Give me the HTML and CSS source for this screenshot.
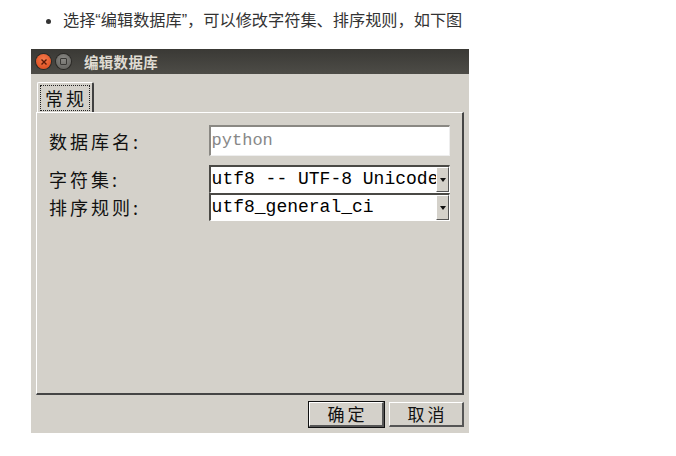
FILE: index.html
```html
<!DOCTYPE html>
<html>
<head>
<meta charset="utf-8">
<link rel="stylesheet" href="styles.css">
</head>
<body>
<ul class="intro">
  <li>选择“编辑数据库”，可以修改字符集、排序规则，如下图</li>
</ul>
<div class="window">
  <div class="titlebar">
    <span class="btn-close"><svg width="8" height="8" viewBox="0 0 8 8"><path d="M1.5 1.5L6.5 6.5M6.5 1.5L1.5 6.5" stroke="#5a1a08" stroke-width="1.4"/></svg></span>
    <span class="btn-min"><span class="sq"></span></span>
    <span class="title">编辑数据库</span>
  </div>
  <div class="body">
    <div class="tabs"><div class="tab"><span class="focus">常规</span></div></div>
    <div class="panel">
      <div class="row row-name">
        <span class="label">数据库名:</span>
        <div class="entry">python</div>
      </div>
      <div class="combos">
        <div class="row">
          <span class="label">字符集:</span>
          <div class="combo"><span class="val">utf8 -- UTF-8 Unicode</span><span class="arrow"></span></div>
        </div>
        <div class="row">
          <span class="label">排序规则:</span>
          <div class="combo"><span class="val">utf8_general_ci</span><span class="arrow"></span></div>
        </div>
      </div>
    </div>
    <div class="buttons">
      <button class="btn default">确定</button>
      <button class="btn">取消</button>
    </div>
  </div>
</div>
</body>
</html>
```
FILE: styles.css
```css
html, body { margin: 0; padding: 0; background: #fff; }
body { width: 676px; height: 456px; overflow: hidden; }

.intro {
  margin: 0;
  padding: 9px 0 0 63px;
  height: 38px;
  box-sizing: border-box;
  font-family: "Liberation Sans", "Noto Sans CJK SC", sans-serif;
  font-size: 16.2px;
  line-height: 22px;
  color: #333;
}
.intro li { list-style: disc; }
.intro li::marker { font-size: 18px; }

.window {
  margin: 11px 0 0 31px;
  width: 438px;
  height: 384px;
  background: #d4d1ca;
  display: flex;
  flex-direction: column;
}
.titlebar {
  height: 25px;
  background: linear-gradient(#3a3935, #4d4c47);
  display: flex;
  align-items: center;
  padding-left: 5px;
}
.btn-close, .btn-min {
  width: 15px; height: 15px; border-radius: 50%;
  display: flex; align-items: center; justify-content: center;
}
.btn-close { background: radial-gradient(circle at 50% 35%, #f47a4c, #d94516); box-shadow: 0 0 0 1px #2a2926; }
.btn-min { margin-left: 5px; background: radial-gradient(circle at 50% 35%, #8a8985, #5d5c58); box-shadow: 0 0 0 1px #2a2926; }
.btn-min .sq { width: 5px; height: 5px; border: 1px solid #3a3936; border-radius: 1px; }
.title {
  margin-left: 13px;
  color: #dfdbd2;
  font-family: "Noto Sans CJK SC", sans-serif;
  font-weight: bold;
  font-size: 14.5px;
  letter-spacing: 0.3px;
}

.body {
  flex: 1;
  display: flex;
  flex-direction: column;
  padding: 8px 5px 6px 5px;
}
.tabs { display: flex; padding-left: 1px; height: 30px; }
.tab {
  width: 57px;
  box-sizing: border-box;
  border-top: 1px solid #fff;
  border-left: 1px solid #fff;
  border-right: 2px solid #404040;
  border-radius: 2px 2px 0 0;
  padding: 2px 2px 1px 2px;
  display: flex;
}
.tab .focus {
  flex: 1;
  border: 1px dotted #222;
  font-family: "Noto Sans CJK SC", serif;
  font-size: 18px;
  line-height: 24px;
  letter-spacing: 3px;
  padding-left: 4px;
  color: #111;
}
.panel {
  height: 283px;
  box-sizing: border-box;
  border-top: 1px solid #fff;
  border-left: 1px solid #fff;
  border-right: 2px solid #454545;
  border-bottom: 2px solid #454545;
  padding: 12px 12px 0 12px;
  display: flex;
  flex-direction: column;
}
.row { display: flex; align-items: center; }
.label {
  width: 160px;
  font-family: "Noto Sans CJK SC", serif;
  font-size: 18px;
  letter-spacing: 3px;
  color: #111;
}
.entry {
  width: 242px; height: 31px; box-sizing: border-box;
  background: #fff;
  border-top: 2px solid #8a8883;
  border-left: 2px solid #8a8883;
  border-right: 1px solid #eee;
  border-bottom: 1px solid #eee;
  font-family: "Liberation Mono", monospace;
  font-size: 17px;
  color: #888;
  padding-left: 1px;
  line-height: 28px;
}
.combos { margin-top: 9px; display: flex; flex-direction: column; }
.combo {
  width: 242px; height: 28px; box-sizing: border-box;
  background: #fff;
  border-top: 2px solid #4a4945;
  border-left: 2px solid #4a4945;
  border-right: 1px solid #fff;
  border-bottom: 1px solid #fff;
  display: flex;
  overflow: hidden;
}
.combo .val {
  flex: 1;
  overflow: hidden;
  white-space: nowrap;
  font-family: "Liberation Mono", monospace;
  font-size: 18px;
  line-height: 25px;
  color: #000;
  padding-left: 1px;
}
.combo .arrow {
  width: 13px;
  flex: none;
  box-sizing: border-box;
  background: #d4d1ca;
  border-top: 1px solid #fff;
  border-left: 1px solid #fff;
  border-right: 1px solid #555;
  border-bottom: 1px solid #555;
  display: flex; align-items: center; justify-content: center;
}
.combo .arrow::after {
  content: "";
  border-left: 3px solid transparent;
  border-right: 3px solid transparent;
  border-top: 4px solid #111;
}
.buttons {
  display: flex;
  justify-content: flex-end;
  gap: 5px;
  margin-top: 7px;
}
.btn {
  width: 75px; height: 25px;
  box-sizing: border-box;
  background: #d4d1ca;
  border-top: 1px solid #fff;
  border-left: 1px solid #fff;
  border-right: 2px solid #555;
  border-bottom: 2px solid #555;
  font-family: "Noto Sans CJK SC", serif;
  font-size: 17px;
  letter-spacing: 3px;
  padding: 0 0 0 3px;
  line-height: 20px;
  color: #111;
}
.btn.default { outline: 1px solid #111; outline-offset: 0; }
```
